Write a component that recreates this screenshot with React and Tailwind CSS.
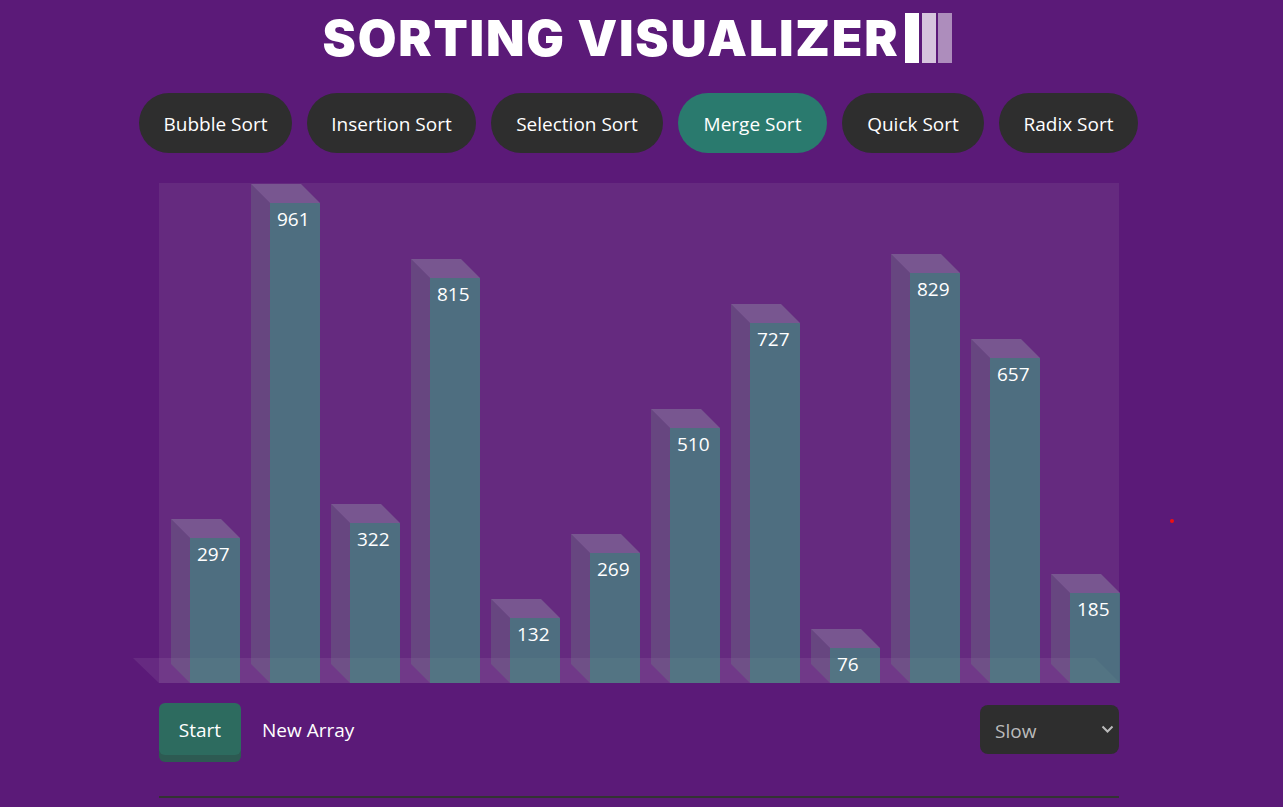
import React from 'react';

const algorithms = [
  { name: 'Bubble Sort', width: 'w-[153px]' },
  { name: 'Insertion Sort', width: 'w-[169px]' },
  { name: 'Selection Sort', width: 'w-[172px]' },
  { name: 'Merge Sort', width: 'w-[149px]' },
  { name: 'Quick Sort', width: 'w-[142px]' },
  { name: 'Radix Sort', width: 'w-[139px]' },
];

// label shown on the bar + bar height in px
const bars = [
  { value: 297, height: 145 },
  { value: 961, height: 480 },
  { value: 322, height: 160 },
  { value: 815, height: 405 },
  { value: 132, height: 65 },
  { value: 269, height: 130 },
  { value: 510, height: 255 },
  { value: 727, height: 360 },
  { value: 76, height: 35 },
  { value: 829, height: 410 },
  { value: 657, height: 325 },
  { value: 185, height: 90 },
];

const Bar = ({ value, height }) => (
  <div className="relative w-[50px] shrink-0 bg-[#409d81]/60 pt-[4px] pl-[7px] text-left text-[19px] leading-[24px] text-white" style={{ height }}>
    {/* top face */}
    <div className="absolute left-[-19px] top-[-19px] h-[19px] w-[69px] bg-[#785690] [clip-path:polygon(0_0,50px_0,100%_100%,19px_100%)]" />
    {/* side face */}
    <div className="absolute left-[-19px] top-[-19px] bottom-0 w-[19px] bg-[#6c8783]/30 [clip-path:polygon(0_0,100%_19px,100%_100%,0_calc(100%-19px))]" />
    {value}
  </div>
);

const App = () => {
  return (
    <div className="relative h-[807px] w-full overflow-hidden bg-[#5b1a78] font-['Open_Sans','Noto_Sans',sans-serif]">
      <div className="w-[1278px]">
        {/* Title */}
        <div className="flex h-[76px] items-center justify-center pr-[3px]">
          <h1 className="font-['Inter',sans-serif] text-[50px] font-black leading-none tracking-[1.8px] text-white">SORTING VISUALIZER</h1>
          <div className="ml-[6px] flex h-[50px]">
            <div className="w-[14px] bg-white" />
            <div className="ml-[3px] w-[14px] bg-white/75" />
            <div className="ml-[2px] w-[14px] bg-white/50" />
          </div>
        </div>

        {/* Algorithm tabs */}
        <div className="mt-[17px] flex justify-center gap-[15px] pr-[1px]">
          {algorithms.map(({ name, width }) => (
            <button
              key={name}
              className={`h-[60px] rounded-[30px] pt-[2px] text-[19px] text-white ${width} ${name === 'Merge Sort' ? 'bg-[#2a7a6e]' : 'bg-[#2e2e2e]'}`}
            >
              {name}
            </button>
          ))}
        </div>

        {/* Chart */}
        <div className="relative mx-auto mt-[30px] flex h-[500px] w-[960px] items-end gap-[30px] bg-[#652a7f] pl-[31px]">
          {/* floor */}
          <div className="absolute bottom-0 left-[-26px] h-[25px] w-[987px] bg-white/[0.07] [clip-path:polygon(0_0,962px_0,100%_100%,26px_100%)]" />
          {bars.map((bar) => (
            <Bar key={bar.value} {...bar} />
          ))}
        </div>

        {/* Controls */}
        <div className="mx-auto mt-[20px] flex w-[960px] items-start justify-between">
          <div className="flex items-center">
            <button className="h-[52px] w-[82px] rounded-[6px] bg-[#2d6b5f] pt-[3px] text-[19px] text-white shadow-[0_7px_0_#2d5a52]">Start</button>
            <button className="ml-[21px] pt-[2px] text-[19px] text-white">New Array</button>
          </div>
          <div className="relative mt-[2px]">
            <select className="block h-[49px] w-[139px] appearance-none rounded-[8px] border-0 bg-[#2e2e2e] pl-[15px] pt-[4px] text-[19px] text-[#bbbbbb]">
              <option>Slow</option>
              <option>Medium</option>
              <option>Fast</option>
            </select>
            <svg className="pointer-events-none absolute right-[5px] top-[20px]" width="13" height="9" viewBox="0 0 13 9" fill="none" stroke="#bbbbbb" strokeWidth="2">
              <path d="M1.5 1.5 L6.5 6.5 L11.5 1.5" />
            </svg>
          </div>
        </div>

        <div className="mx-auto mt-[41px] h-[2px] w-[960px] bg-[#333333]" />
      </div>

      {/* stray dot */}
      <div className="absolute left-[1170px] top-[519px] h-[4px] w-[4px] rounded-full bg-[#f01010]" />
    </div>
  );
};

export default App;
